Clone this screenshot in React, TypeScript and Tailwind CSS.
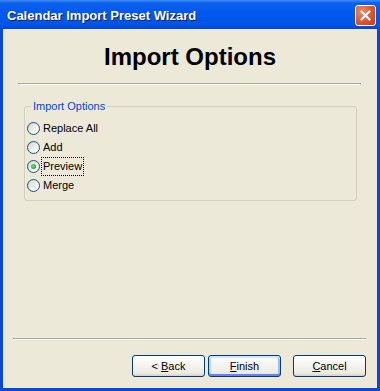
const ui = { fontFamily: '"Liberation Sans", Arial, sans-serif' };

function CloseButton() {
  return (
    <div className="mt-[5px] mr-[4px] flex h-[21px] w-[21px] items-center justify-center rounded-[3px] border border-white bg-[radial-gradient(circle_at_30%_30%,#f08a68_0%,#e0532b_55%,#c4391c_100%)]">
      <svg width="11" height="11" viewBox="0 0 11 11">
        <path d="M1.5 1.5 L9.5 9.5 M9.5 1.5 L1.5 9.5" stroke="#ffffff" strokeWidth="2.2" strokeLinecap="square" />
      </svg>
    </div>
  );
}

function Radio({ label, checked, focused }: { label: string; checked?: boolean; focused?: boolean }) {
  return (
    <div className="flex h-[19px] items-center">
      <span className="ml-[2px] flex h-[13px] w-[13px] items-center justify-center rounded-full border border-[#1c5180] bg-[linear-gradient(135deg,#d4d4cd_0%,#f3f3ef_60%,#ffffff_100%)]">
        {checked && (
          <span className="h-[5px] w-[5px] rounded-full bg-[radial-gradient(circle_at_40%_40%,#7be27b_0%,#2fae2f_60%,#1e8a1e_100%)]" />
        )}
      </span>
      <span
        className={
          "ml-[1px] px-[1px] text-[11px] leading-[17px] text-black border " +
          (focused ? "border-dotted border-black" : "border-transparent")
        }
      >
        {label}
      </span>
    </div>
  );
}

function XpButton({ children, isDefault }: { children: React.ReactNode; isDefault?: boolean }) {
  return (
    <button
      className={
        "flex h-[22px] w-[73px] items-center justify-center rounded-[3px] border border-[#003c74] bg-[linear-gradient(to_bottom,#ffffff_0%,#f4f3ee_50%,#ecebe6_85%,#d6d0c5_100%)] text-[11px] text-black " +
        (isDefault
          ? "shadow-[inset_0_2px_0_#cee7ff,inset_0_-2px_0_#6982ee,inset_2px_0_0_#b8d4fb,inset_-2px_0_0_#a2bdf6]"
          : "")
      }
    >
      {children}
    </button>
  );
}

export default function App() {
  return (
    <div className="flex h-[391px] w-[380px] flex-col bg-[#0a46d8]" style={ui}>
      <div className="flex h-[29px] shrink-0 items-start justify-between bg-[linear-gradient(to_bottom,#3d8df7_0%,#0c61ec_10%,#0058ee_45%,#0055e6_85%,#0046cf_100%)]">
        <span className="pl-[7px] pt-[2px] text-[13px] font-bold leading-[27px] text-white [text-shadow:1px_1px_0_#0a1e6e]">
          Calendar Import Preset Wizard
        </span>
        <CloseButton />
      </div>

      <div className="mx-[3px] mb-[3px] flex flex-1 flex-col bg-[#ece9d8]">
        <h1 className="pt-[14px] text-center text-[24px] font-bold leading-[28px] text-black">Import Options</h1>
        <div className="ml-[15px] mr-[16px] mt-[12px] h-[2px] border-t border-b border-t-[#aca899] border-b-white" />

        <fieldset className="ml-[21px] mt-[15px] w-[333px] rounded-[3px] border border-[#d0d0bf] pb-[5px]">
          <legend className="ml-[6px] px-[2px] text-[11px] leading-[13px] text-[#0046d5]">Import Options</legend>
          <div className="flex flex-col pt-[6px]">
            <Radio label="Replace All" />
            <Radio label="Add" />
            <Radio label="Preview" checked focused />
            <Radio label="Merge" />
          </div>
        </fieldset>

        <div className="flex-1" />

        <div className="ml-[10px] mr-[11px] h-[2px] border-t border-b border-t-[#aca899] border-b-white" />
        <div className="mt-[15px] mb-[11px] flex justify-end pr-[11px]">
          <XpButton>
            &lt; <span className="ml-[3px] underline">B</span>ack
          </XpButton>
          <div className="w-[3px]" />
          <XpButton isDefault>
            <span className="underline">F</span>inish
          </XpButton>
          <div className="w-[12px]" />
          <XpButton>
            <span className="underline">C</span>ancel
          </XpButton>
        </div>
      </div>
    </div>
  );
}
